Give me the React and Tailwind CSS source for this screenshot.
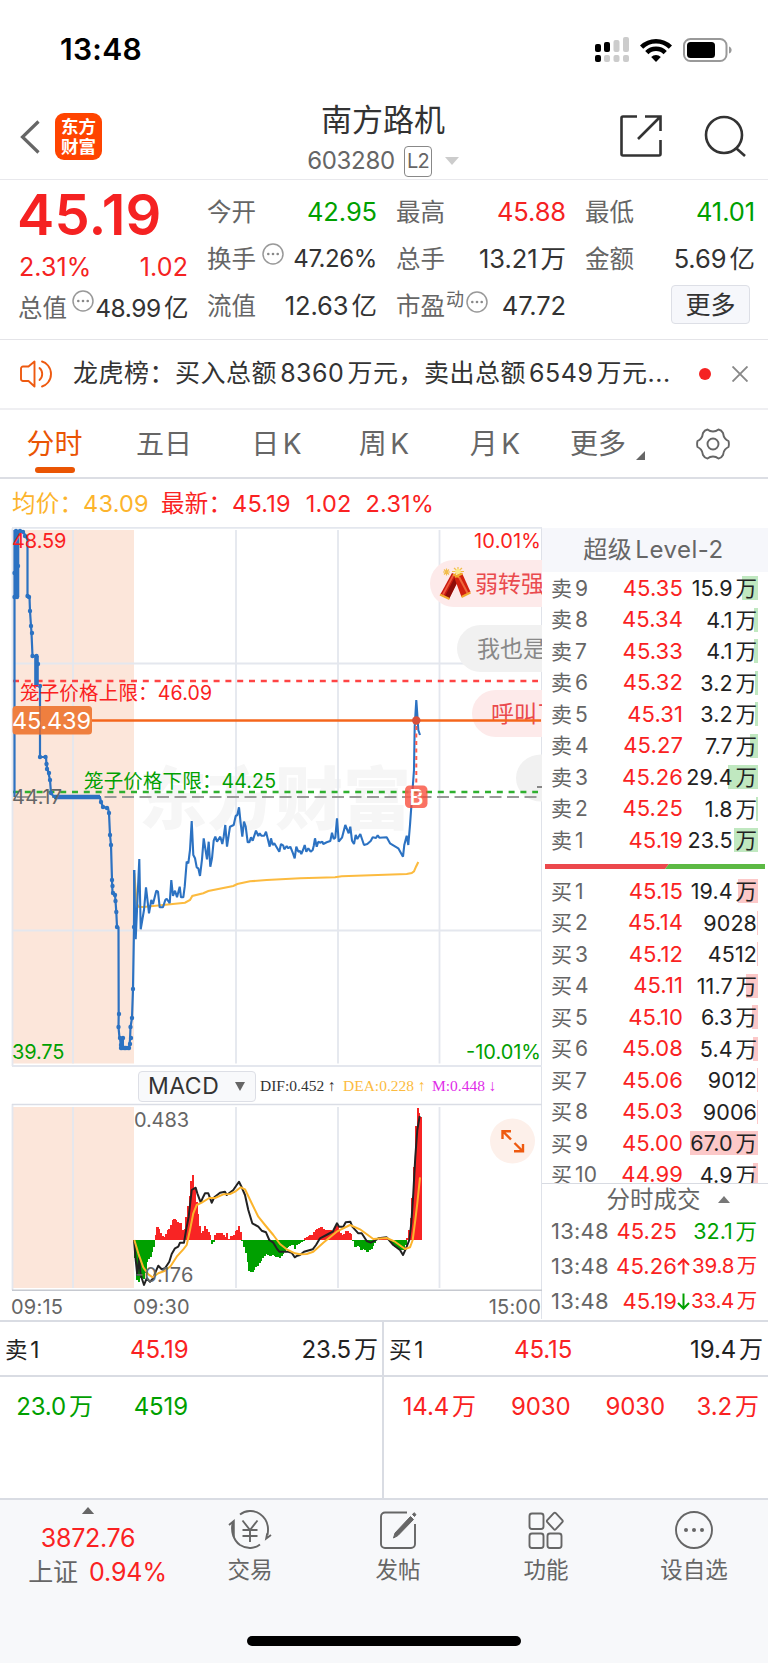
import React from "react";

/* ---------- chart data (thirds of a pixel, relative to each pane) ---------- */
const parse = (text, ox, oy) =>
  text
    .trim()
    .split(/\s+/)
    .map((p) => p.split(",").map(Number))
    .map(([x, y]) => [ox + x / 3, oy + y / 3]);
const join = (...parts) => parts.flat().map((p) => p[0].toFixed(1) + "," + p[1].toFixed(1)).join(" ");

const AUCTION =
  "14.5,797 14.5,531 23,531 25,535 27.5,540 27.5,596 29.5,597 30,611 31,626 31.5,633 32.5,656 36,656 36,686 40,686 40,757 46,757 46.5,765 48,771 50,780 51,793 54,797 100,797 101,802 103,807 108,808 109,813 110,835 111,845 112,880 112.5,893 115,895 115.5,901 116.3,912 117,927 118.5,927.5 118.7,1014 118.5,1027 119.5,1038 121,1039 121,1048 129,1048 130,1040 130.5,1027 132,1018 133,989 134,927 134.3,870";
const AUCTION_DOTS = [
  [14.5, 573], [14.5, 597], [17, 597], [18, 566], [16, 531], [20, 531], [23, 532], [25, 536], [27.5, 596], [29, 597], [30, 611], [31, 626], [32, 633],
  [32.5, 656], [36.5, 656], [38, 664], [40, 686], [40, 757], [45.5, 757], [46.5, 764], [47, 769], [49, 773], [50, 780], [51, 793],
  [101, 802], [103, 807], [107, 808], [109, 813], [110, 835], [111, 845], [112, 880], [112.5, 886], [113, 893], [115, 895],
  [115.5, 901], [116.3, 912], [117, 927], [119, 1014], [118.5, 1027], [120, 1038], [123, 1038], [121, 1045], [121, 1048], [125, 1048],
  [129, 1048], [130, 1044], [131, 1038], [130.5, 1027], [132, 1018], [133, 989], [134, 927],
];

const priceLine = join(
  parse(
    "402,300 407,508 411,420 418,267 422,478 432,420 438,352 447,430 454,390 459,402 469,362 474,365 479,412 489,412 496,390 500,386 509,400 514,330 519,378 525,362 531,382 539,350 543,382 550,382 554,350 560,275 565,280 570,240 575,153 580,255 585,265 590,292 595,295 600,318 606,268 611,205 621,268 626,215 631,290 636,265 641,212 646,200 651,215 661,200 667,222 671,200 676,165 681,230 690,170 701,165 707,138 712,135 717,112 722,160 727,200 732,155 737,170 743,217 748,217 753,202 758,212 768,182 775,198 779,190 784,197 793,197 798,185 809,230 813,205 818,225 823,220 838,245 843,222 850,227 853,238 860,228 865,235 871,230 879,250 884,265 889,230 895,245 900,243",
    0, 770
  ),
  parse(
    "64,252 69,240 74,225 79,245 85,235 92,245 98,240 101,228 105,205 110,230 115,215 120,218 127,215 130,222 140,217 151,213 156,188 161,207 166,203 171,145 176,215 186,203 196,165 206,190 211,170 216,212 222,222 227,195 232,207 241,192 252,225 262,222 272,213 278,202 288,204 293,196 298,203 320,202 330,220 355,235 369,260 373,225 380,197 385,225 390,165 394,110 402,0 404,-130 409,-210 413,-150 415,-120 420,-105",
    280, 770
  )
);
const averageLine = join(
  parse("403,310 410,400 415,410 430,411 489,405 555,398 570,390 577,378 610,370 625,363 700,348 712,342 750,334 800,330 900,325", 0, 770),
  parse("165,322 185,319 380,312 395,309 402,304 408,290 415,276", 280, 770)
);
const difLine = join(
  parse(
    "402,540 407,600 412,645 417,595 422,645 432,675 440,655 450,665 460,655 467,635 475,617 485,628 495,625 508,605 515,582 525,565 535,560 540,548 552,548 560,500 566,470 575,390 587,383 592,400 602,427 610,410 615,400 625,400 635,428 643,412 660,398 675,395 680,405 700,390 710,375 717,365 725,382 735,405 745,450 757,490 775,500 785,512 798,517 808,540 820,548 830,565 838,575 865,575 875,578 884,592 892,587 900,585",
    0, 1060
  ),
  parse(
    "72,575 98,568 108,555 120,535 145,522 158,515 171,490 177,500 190,500 197,487 211,485 217,500 235,520 245,520 260,543 272,548 285,542 295,535 320,532 340,555 360,570 369,585 378,565 388,540 394,490 400,400 406,290 412,210 419,168",
    280, 1060
  )
);
const deaLine = join(
  parse(
    "403,540 415,580 430,622 445,643 458,652 475,640 495,632 512,618 530,590 550,568 560,555 570,510 580,460 590,435 605,428 628,414 645,414 670,403 690,402 705,395 722,382 735,388 755,430 775,470 795,495 820,525 840,552 860,568 885,580",
    0, 1060
  ),
  parse("60,583 80,582 100,575 130,548 170,515 210,495 240,508 280,537 320,534 345,545 375,567 390,562 398,540 406,480 412,430 420,352", 280, 1060)
);

const HIST = [
  [403, -10], [408, -100], [413, -136], [418, -115], [423, -112], [432, -118], [438, -92], [442, -60], [447, -56], [452, -50], [458, -33], [464, -12],
  [468, 27], [474, 45], [479, 25], [484, 18], [490, 5], [495, 12], [500, 25], [505, 33], [511, 33], [515, 60], [525, 63], [530, 60],
  [536, 48], [541, 57], [546, 40], [551, 20], [556, 50], [561, 90], [566, 115], [571, 148], [577, 209], [582, 175], [587, 130],
  [592, 95], [597, 58], [602, 25], [607, 15], [612, 42], [617, 42], [622, 25], [629, 25], [632, -5], [637, -18], [641, -2], [642, 2], [647, 20],
  [667, 20], [672, 15], [677, 8], [681, 20], [685, 1], [691, 12], [697, 12], [702, 15], [707, 30], [712, 30], [717, 42], [722, 22],
  [726, 20], [727, -10], [732, -20], [737, -38], [742, -65], [747, -92], [752, -95], [760, -97], [765, -82], [775, -75], [785, -58], [795, -45],
  [800, -38], [805, -48], [812, -50], [817, -42], [825, -50], [835, -52], [842, -57], [845, -45], [850, -42], [860, -22],
  [870, -18], [880, -14], [883, -30], [890, -15], [900, -8], [912, -3], [915, 6], [925, 12], [935, 15], [945, 28], [955, 36], [965, 39],
  [975, 30], [990, 30], [1000, 25], [1010, 48], [1020, 25], [1030, 12], [1040, 30], [1050, 20], [1056, 18], [1060, -20], [1070, -22],
  [1075, -15], [1083, -30], [1090, -25], [1098, -36], [1105, -36], [1115, -25], [1123, -12], [1130, 1], [1160, 4], [1166, -2],
  [1175, -10], [1185, -20], [1195, -28], [1212, -30], [1219, -5], [1222, 8], [1226, 25], [1230, 50], [1235, 95], [1240, 180], [1244, 265],
  [1249, 392], [1254, 398], [1259, 370], [1265, 370],
];
const histAt = (x) => {
  for (let i = 1; i < HIST.length; i++) {
    if (x <= HIST[i][0]) {
      const [x0, y0] = HIST[i - 1];
      const [x1, y1] = HIST[i];
      return y0 + ((y1 - y0) * (x - x0)) / (x1 - x0);
    }
  }
  return HIST[HIST.length - 1][1];
};
const bars = Array.from({ length: 169 }, (_, i) => {
  const x = 403 + i * 5.1;
  return { x: x / 3, h: histAt(x + 2.5) / 3 };
});

/* ---------- small parts ---------- */
const Dots = ({ className = "" }) => (
  <svg viewBox="0 0 22 22" className={"size-[22px] shrink-0 " + className} fill="none">
    <circle cx="11" cy="11" r="10" stroke="#999" strokeWidth="1.5" />
    <circle cx="6.3" cy="11" r="1.3" fill="#888" />
    <circle cx="11" cy="11" r="1.3" fill="#888" />
    <circle cx="15.7" cy="11" r="1.3" fill="#888" />
  </svg>
);

const Cell = ({ label, value, color = "text-[#333]", mark, size = "text-[25.5px] tracking-[-0.1px]" }) => (
  <div className="flex h-[47px] items-center justify-between">
    <span className="-ml-px flex items-center pt-[1px] text-[24.5px] text-[#666]">
      {label}
      {mark}
    </span>
    <span className={"pt-[1px] whitespace-nowrap " + size + " " + color}>{value}</span>
  </div>
);

const StatusBar = () => (
  <header className="flex h-[94px] items-center justify-between pt-[5px] pr-[36px] pl-[60px]">
    <span className="text-[30px] font-semibold tracking-[0.3px] text-black">13:48</span>
    <div className="flex items-center gap-[11px]">
      <svg viewBox="0 0 34 25" className="h-[25px] w-[34px]">
        <g fill="#000">
          <rect x="0" y="7" width="6" height="8" rx="2" />
          <rect x="9" y="5" width="6" height="10" rx="2" />
          <rect x="0" y="18" width="6" height="7" rx="2" />
        </g>
        <g fill="#ccc">
          <rect x="18.500" y="3" width="6" height="12" rx="2" />
          <rect x="28" y="0" width="6" height="15" rx="2" />
          <rect x="9" y="18" width="6" height="7" rx="2" />
          <rect x="18.500" y="18" width="6" height="7" rx="2" />
          <rect x="28" y="18" width="6" height="7" rx="2" />
        </g>
      </svg>
      <svg viewBox="0 0 32 24" className="h-[24px] w-[32px]" fill="none" stroke="#000" strokeWidth="4.600">
        <path d="M1.600 9.200a20.500 20.500 0 0 1 28.800 0" />
        <path d="M6.800 14.600a13 13 0 0 1 18.400 0" />
        <path d="M16 24l-4.800-5a6.800 6.800 0 0 1 9.600 0z" fill="#000" stroke="none" />
      </svg>
      <svg viewBox="0 0 49 24" className="h-[24px] w-[49px]">
        <rect x="1" y="1" width="42.500" height="22" rx="6.500" fill="none" stroke="#999" strokeWidth="2" />
        <rect x="4" y="4" width="28" height="16" rx="3.500" fill="#000" />
        <path d="M46 8.500c3.500 1 3.500 6 0 7z" fill="#999" />
      </svg>
    </div>
  </header>
);

const TitleBar = () => (
  <div className="grid h-[86px] grid-cols-[1fr_200px_1fr] border-b border-[#e8e8ec] pb-[1px]">
    <div className="flex items-center pl-[20px]">
      <svg viewBox="0 0 20 34" className="h-[34px] w-[20px]" fill="none" stroke="#666" strokeWidth="3.200">
        <path d="M18.500 1.500L2.500 17l16 15.500" />
      </svg>
      <div className="ml-[15px] flex size-[47px] flex-col items-center justify-center rounded-[9px] bg-[#ff4400] text-[17.500px] leading-[20px] font-bold text-white">
        <span>东方</span>
        <span>财富</span>
      </div>
    </div>
    <div className="-ml-[2px] flex flex-col items-center">
      <div className="mt-[6px] h-[43px] text-[31px] leading-[40px] text-[#333]">南方路机</div>
      <div className="flex h-[36px] items-center text-[#666]">
        <span className="text-[24px] tracking-[-0.300px]">603280</span>
        <span className="ml-[9px] flex h-[31px] w-[28px] items-center justify-center rounded-[4px] border-[1.500px] border-[#888] text-[20px] tracking-[-1px]">L2</span>
        <svg viewBox="0 0 14 8" className="ml-[13px] h-[8px] w-[14px]">
          <path d="M0 0h14L7 8z" fill="#ccc" />
        </svg>
      </div>
    </div>
    <div className="flex items-center justify-end gap-[41px] pr-[22px] pb-[1px]">
      <svg viewBox="0 0 44 44" className="size-[44px]" fill="none" stroke="#333" strokeWidth="2.600">
        <path d="M18 2.500H4a1.500 1.500 0 0 0-1.500 1.500v36A1.500 1.500 0 0 0 4 41.500h36a1.500 1.500 0 0 0 1.500-1.500V26" />
        <path d="M26 2.500h15.500V17M41 3L19 25" />
      </svg>
      <svg viewBox="0 0 42 42" className="size-[42px]" fill="none" stroke="#333" strokeWidth="2.600">
        <circle cx="20" cy="20" r="18" />
        <path d="M32.500 33.500L41 41" />
      </svg>
    </div>
  </div>
);

const Quote = () => (
  <section className="grid h-[160px] grid-cols-[168px_169px_169px_169px] gap-x-[20px] border-b border-[#e4e4e8] pt-[8px] pl-[20px]">
    <div className="flex flex-col">
      <div className="flex h-[54px] items-center text-[56px] font-semibold tracking-[0.200px] text-[#f52222]">
        <span className="-ml-[3px]">45.19</span>
      </div>
      <div className="flex h-[50px] items-center justify-between pt-[1px] text-[25px] tracking-[0.100px] text-[#f52222]">
        <span className="-ml-[1px]">2.31%</span>
        <span>1.02</span>
      </div>
      <div className="flex h-[30px] items-center justify-between pt-[2px] text-[24.500px] whitespace-nowrap">
        <span className="-ml-[2px] flex text-[#666]">
          总值
          <Dots className="ml-[5px]" />
        </span>
        <span className="tracking-[-0.400px] text-[#333]">48.99亿</span>
      </div>
    </div>
    <div>
      <Cell label="今开" value="42.95" color="text-[#00a000]" />
      <Cell label="换手" value="47.26%" size="text-[24px] tracking-[-0.4px]" mark={<Dots className="mb-[10px] ml-[6px]" />} />
      <Cell label="流值" value="12.63亿" />
    </div>
    <div>
      <Cell label="最高" value="45.88" color="text-[#f52222]" />
      <Cell label="总手" value="13.21万" />
      <Cell
        label="市盈"
        value="47.72"
        mark={
          <span className="mb-[12px] ml-[1px] flex items-center text-[18px] leading-none">
            动
            <Dots className="mt-[4px] ml-[2px]" />
          </span>
        }
      />
    </div>
    <div>
      <Cell label="最低" value="41.01" color="text-[#00a000]" />
      <Cell label="金额" value="5.69亿" />
      <div className="flex h-[45px] items-center justify-end pr-[5px]">
        <button className="h-[39px] w-[79px] rounded-[4px] border border-[#dddfe6] bg-[#f6f7fb] pt-[1px] text-[25px] leading-none text-[#333]">更多</button>
      </div>
    </div>
  </section>
);

const News = () => (
  <section className="flex h-[70px] items-center border-b-2 border-[#efeff2] pr-[20px] pl-[20px]">
    <svg viewBox="0 0 33 28" className="h-[28px] w-[33px]" fill="none" stroke="#ee5a10" strokeWidth="1.900" strokeLinejoin="round" strokeLinecap="round">
      <path d="M14.500 1.500v25L8.500 21H3a2 2 0 0 1-2-2V8.500a2 2 0 0 1 2-2h5.500z" />
      <path d="M19.500 8c3.600 3 3.600 9 0 12M22 1.500c4 1 9 5.500 9 12.500s-5 11.500-9 12.500" />
    </svg>
    <span className="ml-[20px] w-[600px] text-[25px] tracking-[0.500px] whitespace-nowrap text-[#333]">龙虎榜：买入总额8360万元，卖出总额6549万元...</span>
    <span className="ml-auto size-[12px] rounded-full bg-[#f52222]" />
    <svg viewBox="0 0 16 16" className="ml-[21px] size-[16px]" stroke="#888" strokeWidth="1.900">
      <path d="M0.500 0.500l15 15M15.500 0.500l-15 15" />
    </svg>
  </section>
);

const Tabs = () => (
  <nav className="flex h-[69px] items-center border-b-2 border-[#dcdee4] text-[28px] whitespace-nowrap text-[#666]">
    <div className="flex h-full w-[110px] flex-col items-center pt-[13px] text-[#ea5504]">
      <span className="-ml-px leading-[42px]">分时</span>
      <span className="mt-[2px] h-[6px] w-[40px] rounded-full bg-[#ea5504]" />
    </div>
    <span className="w-[108px] pt-[1px] text-center">五日</span>
    <span className="w-[117px] pt-[1px] text-center">日K</span>
    <span className="w-[98px] pt-[1px] text-center">周K</span>
    <span className="w-[124px] pt-[1px] text-center">月K</span>
    <span className="ml-[13px] flex pt-[1px]">
      更多
      <svg viewBox="0 0 9 9" className="mt-[28px] ml-[10px] size-[9px]">
        <path d="M9 0v9H0z" fill="#666" />
      </svg>
    </span>
    <svg viewBox="0 0 34 32" className="ml-[51px] h-[32px] w-[34px]" fill="none" stroke="#666" strokeWidth="1.900" strokeLinejoin="round">
      <circle cx="17" cy="16" r="5.500" />
      <path d="M11.500 1.500q2.500 2 5.500 2t5.500-2q3 .5 4.500 3.500.5 3.500 2 5.300T32.500 13q.8 3 0 6-2 1-3.500 2.700T27 27q-1.500 3-4.500 3.500-2.500-2-5.500-2t-5.500 2Q8.500 30 7 27q-.5-3.500-2-5.300T1.500 19q-.8-3 0-6 2-1 3.500-2.700T7 5q1.500-3 4.500-3.500z" />
    </svg>
  </nav>
);

const FONT = '"Inter","Noto Sans CJK SC",sans-serif';

const PriceChart = () => (
  <svg viewBox="0 527 542 541" className="block h-[541px] w-[542px]" fontFamily={FONT}>
    <text x="139" y="824" fontSize="68" fontWeight="900" fill="#f6f6f6">东方财富</text>
    <rect x="13" y="530" width="121" height="533.500" fill="#fce6da" />
    <g stroke="#e4e7ee" strokeWidth="1.800">
      <path d="M12.500 528V1066M73 530V1063.500M236 530V1063.500M338 530V1063.500M439.500 530V1063.500M12 663.500H542M12 930.500H542" />
      <path d="M12 527.800H542M12 1066H542" />
    </g>
    <g>
      <path d="M542 560H453.500a23.500 23.500 0 0 0 0 47H542z" fill="#fdeaea" />
      <path d="M542 625H480.500a23.500 23.500 0 0 0 0 47H542z" fill="#f1f1f1" />
      <path d="M542 690H495.500a23.500 23.500 0 0 0 0 47H542z" fill="#fdeaea" />
      <path d="M542 754.500a25 23.500 0 0 0-26 23.500a25 23.500 0 0 0 26 23.500z" fill="#f1f1f1" />
      <text x="475" y="592" fontSize="23" fill="#ea4a4e">弱转强</text>
      <text x="477" y="657" fontSize="23" fill="#888">我也是</text>
      <text x="491" y="722" fontSize="23" fill="#ea4a4e">呼叫了</text>
      <path d="M537 787H542" stroke="#888" strokeWidth="2" />
      <g>
        <g stroke="#f2bd4c" strokeWidth="1.200">
          <path d="M443 572h7M446.500 568.500v7M444 569.500l5 5M449 569.500l-5 5" />
          <path d="M452 571.500h12M458 567v8M454 568l8 7M462 568l-8 7" />
        </g>
        <circle cx="458" cy="571.500" r="2.800" fill="#fbe98c" />
        <path d="M440 595L452 573l8 4-11 22z" fill="#c81a10" />
        <path d="M444.500 597L456 575l4 2-11 22z" fill="#8f0d08" />
        <path d="M443 594.500L453.500 575" stroke="#f0593c" strokeWidth="1.800" />
        <path d="M454 577l8-4 8.500 19-9 5z" fill="#d3210f" />
        <path d="M459 577l8.500 16" stroke="#f0683c" strokeWidth="2" />
        <path d="M440 594.500l9.500 4.500M461.500 597l9-4.500M453 574.500l6 2.500M455 577l7.500-3.500" stroke="#f1a92e" strokeWidth="2" />
      </g>
    </g>
    <path d="M13 681H538" stroke="#f44" strokeWidth="2.600" strokeDasharray="6 5.800" />
    <path d="M13 792H538" stroke="#2fb02f" strokeWidth="2.700" strokeDasharray="6 5.800" />
    <path d="M17 797H538" stroke="#999" strokeWidth="2.200" strokeDasharray="12 5.500" />
    <polyline points={averageLine} fill="none" stroke="#fcbb40" strokeWidth="2.100" />
    <polyline points={AUCTION} fill="none" stroke="#2c72c2" strokeWidth="2.200" />
    <path d="M54 797H100" stroke="#2c72c2" strokeWidth="4.500" />
    <path d="M17 531V597M36.500 656V685" stroke="#2c72c2" strokeWidth="4.600" />
    <path d="M119 1039h5v9h-4z" fill="#2c72c2" />
    <path d="M120.500 1048H129.500" stroke="#2c72c2" strokeWidth="4.200" />
    {AUCTION_DOTS.map(([x, y], i) => (
      <circle key={i} cx={x} cy={y} r="2.200" fill="#2c72c2" />
    ))}
    <polyline points={priceLine} fill="none" stroke="#2c72c2" strokeWidth="2.100" strokeLinejoin="bevel" />
    <path d="M13 720.500H541" stroke="#f5661c" strokeWidth="2.600" />
    <path d="M416.300 726V786" stroke="#ff5a4a" strokeWidth="2" strokeDasharray="4 3.500" />
    <circle cx="416.300" cy="720.500" r="4.200" fill="#d9503a" />
    <rect x="405" y="785.500" width="22.500" height="22.500" rx="4.500" fill="#f84a38" fillOpacity="0.780" />
    <text x="416.300" y="804.500" fontSize="21" fontWeight="600" fill="#fff" textAnchor="middle">B</text>
    <path d="M405 797H428M405 792H428" stroke="#f2685a" strokeWidth="1.500" strokeDasharray="6 5.800" opacity=".8" />
    <rect x="12.500" y="706" width="79.500" height="28.500" rx="3.500" fill="#ef7f3f" />
    <path d="M40 706V734.500" stroke="#b96a4e" strokeWidth="1.600" />
    <text x="12" y="729" fontSize="23.500" textLength="79" fill="#fff">45.439</text>
    <g fontSize="20">
      <text x="12" y="547.500" textLength="54.500" fill="#fa2020">48.59</text>
      <text x="541" y="547.500" textLength="67" textAnchor="end" fill="#fa2020">10.01%</text>
      <text x="12" y="803.500" textLength="50" fill="#666">44.17</text>
      <text x="12" y="1059" textLength="52.500" fill="#00a000">39.75</text>
      <text x="541" y="1059" textLength="75" textAnchor="end" fill="#00a000">-10.01%</text>
    </g>
    <g fontSize="19.500">
      <text x="20" y="700" textLength="192" fill="#fa2020">笼子价格上限：46.09</text>
      <text x="84" y="788" textLength="192" fill="#00a000">笼子价格下限：44.25</text>
    </g>
  </svg>
);

const MacdChart = () => (
  <svg viewBox="0 1103 542 188" className="block h-[188px] w-[542px]" fontFamily={FONT}>
    <rect x="13" y="1107" width="121" height="181" fill="#fce6da" />
    <g stroke="#e4e7ee" strokeWidth="1.800">
      <path d="M12.500 1104V1290M73 1107V1288M236 1107V1288M338 1107V1288M439.500 1107V1288" />
    </g>
    <path d="M12 1104.500H542" stroke="#dadde5" strokeWidth="1.500" />
    <path d="M12 1290.300H542" stroke="#c6c9d0" strokeWidth="1.500" />
    <g shapeRendering="crispEdges">
      {bars.map((b, i) => (
        <rect key={i} x={b.x} y={b.h > 0 ? 1240 - b.h : 1240} width="2.100" height={Math.abs(b.h)} fill={b.h > 0 ? "#f82424" : "#00a000"} />
      ))}
    </g>
    <polyline points={difLine} fill="none" stroke="#222" strokeWidth="2" strokeLinejoin="round" />
    <polyline points={deaLine} fill="none" stroke="#fcb42c" strokeWidth="2" strokeLinejoin="round" />
    <g fontSize="20" fill="#666">
      <text x="134" y="1127" textLength="55">0.483</text>
      <text x="135" y="1282" textLength="58.500">-0.176</text>
    </g>
    <circle cx="512.500" cy="1141" r="22.500" fill="#fdf0ea" />
    <path d="M502.500 1139V1131.200H511M503 1131.500l8 8M523 1144V1151.300H514M522.500 1151l-8-8" fill="none" stroke="#ee5a10" strokeWidth="2.400" />
  </svg>
);

const Chart = () => (
  <div className="flex h-[792px] w-[542px] flex-col border-r border-[#dfe2e9]">
    <PriceChart />
    <div className="flex h-[35px] items-center pl-[138px] whitespace-nowrap">
      <div className="mt-[1px] flex h-[31px] w-[118px] items-center justify-between rounded-[4px] border border-[#dddfe6] bg-[#f8f9fb] pr-[10px] pl-[9px]">
        <span className="text-[23px] leading-none tracking-[0.500px] text-[#333]">MACD</span>
        <svg viewBox="0 0 10 9" className="h-[9px] w-[10px]">
          <path d="M0 0h10L5 9z" fill="#666" />
        </svg>
      </div>
      <div className="flex items-center pt-[1px] font-['Liberation_Serif'] text-[15.500px]">
        <span className="ml-[4px] w-[83px] text-[#333]">DIF:0.452 ↑</span>
        <span className="w-[89px] text-[#fcbb40]">DEA:0.228 ↑</span>
        <span className="text-[#e02ce8]">M:0.448 ↓</span>
      </div>
    </div>
    <MacdChart />
    <div className="flex h-[28px] items-center pt-[4px] pl-[11px] text-[20px] tracking-[0.200px] text-[#666]">
      <span className="w-[122px]">09:15</span>
      <span>09:30</span>
      <span className="ml-auto">15:00</span>
    </div>
  </div>
);

const ASKS = [
  ["卖9", "45.35", "15.9万", 16], ["卖8", "45.34", "4.1万", 4], ["卖7", "45.33", "4.1万", 4],
  ["卖6", "45.32", "3.2万", 3], ["卖5", "45.31", "3.2万", 3], ["卖4", "45.27", "7.7万", 8],
  ["卖3", "45.26", "29.4万", 30], ["卖2", "45.25", "1.8万", 2], ["卖1", "45.19", "23.5万", 24],
];
const BIDS = [
  ["买1", "45.15", "19.4万", 20], ["买2", "45.14", "9028", 1], ["买3", "45.12", "4512", 1],
  ["买4", "45.11", "11.7万", 12], ["买5", "45.10", "6.3万", 6], ["买6", "45.08", "5.4万", 5],
  ["买7", "45.06", "9012", 1], ["买8", "45.03", "9006", 1], ["买9", "45.00", "67.0万", 68],
  ["买10", "44.99", "4.9万", 5],
];

const Level = ({ row: [label, price, volume, bar], tone }) => (
  <div className="grid h-[31.500px] shrink-0 grid-cols-[60px_72px_74px] items-center pl-[9px] text-[22px] tracking-[0.100px] whitespace-nowrap">
    <span className="text-[21px] tracking-[0.300px] text-[#666]">{label}</span>
    <span className="text-right text-[#fa2222]">{price}</span>
    <span className="relative flex h-[24px] items-center justify-end text-[21.500px] text-[#222]">
      <span className={"absolute top-0 right-[-1px] h-full " + tone} style={{ width: bar }} />
      <span className="relative">{volume}</span>
    </span>
  </div>
);

const TICKS = [
  ["13:48", "45.25", "", "32.1万", "text-[21.5px] text-[#00a000]"],
  ["13:48", "45.26", "↑", "39.8万", "text-[20.5px] tracking-[-0.2px] text-[#fa2222]"],
  ["13:48", "45.19", "↓", "33.4万", "text-[20.5px] tracking-[-0.2px] text-[#fa2222]"],
];

const Depth = () => (
  <aside className="flex h-[792px] w-[226px] flex-col">
    <div className="mt-[1px] flex h-[44px] items-center justify-center bg-[#f6f7fb] pr-[3px] text-[24px] tracking-[0.500px] text-[#666]">超级Level-2</div>
    <div className="flex flex-col">
      {ASKS.map((r) => (
        <Level key={r[0]} row={r} tone="bg-[#c0e8c0]" />
      ))}
    </div>
    <div className="mx-[3px] mt-[8.500px] mb-[6px] flex h-[5px] shrink-0">
      <svg viewBox="0 0 220 5" className="h-[5px] w-[220px]">
        <path d="M0 0h124l-4 5H0z" fill="#ec484c" />
        <path d="M124 0h96v5H120z" fill="#5cb944" />
      </svg>
    </div>
    <div className="flex h-[310.500px] flex-col overflow-hidden border-b-[1.500px] border-[#d8dbe2]">
      {BIDS.map((r) => (
        <Level key={r[0]} row={r} tone="bg-[#fcc8c8]" />
      ))}
    </div>
    <div className="flex h-[30.500px] shrink-0 items-center justify-center pt-[2px] pl-[26px] text-[23.500px] text-[#666]">
      分时成交
      <svg viewBox="0 0 12 7" className="ml-[17px] h-[7px] w-[12px]">
        <path d="M0 7h12L6 0z" fill="#777" />
      </svg>
    </div>
    {TICKS.map(([time, price, arrow, volume, tone], i) => (
      <div key={i} className="flex h-[35px] shrink-0 items-center pl-[9px] text-[22px] whitespace-nowrap">
        <span className="w-[58px] tracking-[0.200px] text-[#666]">{time}</span>
        <span className="w-[68px] text-right tracking-[0.100px] text-[#fa2222]">{price}</span>
        <svg viewBox="0 0 13 17" className="h-[17px] w-[13px]" fill="none" stroke={arrow === "↑" ? "#fa2222" : "#00a000"} strokeWidth="2">
          {arrow === "↑" && <path d="M6.500 16.500V1.500M1 7l5.500-5.500L12 7" />}
          {arrow === "↓" && <path d="M6.500 0.500v15M1 10l5.500 5.500L12 10" />}
        </svg>
        <span className={"w-[67px] text-right " + tone}>{volume}</span>
      </div>
    ))}
  </aside>
);

const Best = () => (
  <section className="grid h-[180px] grid-cols-[384px_384px] grid-rows-[55px_125px] border-t-2 border-b-2 border-[#d9dce3] text-[24px] tracking-[-0.100px] whitespace-nowrap">
    <div className="flex items-center border-r-2 border-b-2 border-[#d9dce3] pt-[2px] pr-[4px] pl-[5px] text-[#222]">
      <span className="w-[125px] text-[22.500px]">卖1</span>
      <span className="text-[#fa2222]">45.19</span>
      <span className="ml-auto">23.5万</span>
    </div>
    <div className="flex items-center border-b-2 border-[#d9dce3] pt-[2px] pr-[5px] pl-[5px] text-[#222]">
      <span className="w-[125px] text-[22.500px]">买1</span>
      <span className="text-[#fa2222]">45.15</span>
      <span className="ml-auto">19.4万</span>
    </div>
    <div className="grid grid-cols-[93px_95px_96px_96px] items-start border-r-2 border-[#d9dce3] pt-[12px] text-right text-[#00a000]">
      <span>23.0万</span>
      <span>4519</span>
    </div>
    <div className="grid grid-cols-[92px_94.500px_94.500px_94px] items-start pt-[12px] text-right text-[#fa2222]">
      <span>14.4万</span>
      <span>9030</span>
      <span>9030</span>
      <span>3.2万</span>
    </div>
  </section>
);

const NavItem = ({ label, children }) => (
  <div className="flex w-[148px] flex-col items-center pt-[8px] text-[22.500px] text-[#666]">
    <svg viewBox="0 0 44 44" className="size-[44px]" fill="none" stroke="#666" strokeWidth="1.900">
      {children}
    </svg>
    <span className="leading-[36px]">{label}</span>
  </div>
);

const BottomNav = () => (
  <footer className="flex h-[163px] flex-col bg-[#f7f8fa]">
    <div className="flex h-[130px] whitespace-nowrap">
      <div className="flex w-[176px] flex-col items-center pt-[7px]">
        <svg viewBox="0 0 14 8" className="h-[7px] w-[14px]">
          <path d="M0 8h14L7 0z" fill="#666" />
        </svg>
        <span className="mt-[8px] text-[25px] leading-[32px] tracking-[-0.300px] text-[#fa2222]">3872.76</span>
        <span className="ml-[19px] flex gap-[11px] text-[25px] leading-[36px] tracking-[-0.100px]">
          <span className="text-[#666]">上证</span>
          <span className="text-[#fa2222]">0.94%</span>
        </span>
      </div>
      <NavItem label="交易">
        <path d="M12 6.500C17 2.500 26 1.500 32 6c7 5 9 13 7.500 21M32 36.500c-5 4-13 5-20 .5C5 32 2.500 22 5 14" />
        <path d="M1 17l4.800-4V29M43 27l-4.800 3.500 1-5" />
        <path d="M14.500 12.500L22 22l7.500-9.500M22 22v12M14.500 22h15M14.500 28h15" />
      </NavItem>
      <NavItem label="发帖">
        <path d="M31 4.500H9a4 4 0 0 0-4 4V36a4 4 0 0 0 4 4h26a4 4 0 0 0 4-4V16" />
        <path d="M34.500 8.500l3 3L22 27.500l-4.500 2.500 1.500-5zM36.500 6.500l1.500-1.800 2 1.800-1.500 2z" fill="#666" strokeWidth="1" />
      </NavItem>
      <NavItem label="功能">
        <rect x="5.500" y="5.500" width="14" height="15.500" rx="2.500" />
        <rect x="5.500" y="25.500" width="14" height="14.500" rx="2.500" />
        <rect x="23.500" y="25.500" width="14" height="14.500" rx="2.500" />
        <path d="M29.800 5.200q1-1 2 0l6.500 7q.9 1 0 2l-6.500 7q-1 1-2 0l-6.500-7q-.9-1 0-2z" />
      </NavItem>
      <NavItem label="设自选">
        <circle cx="22" cy="22" r="18" />
        <g fill="#666" stroke="none">
          <circle cx="14" cy="22" r="2" />
          <circle cx="22" cy="22" r="2" />
          <circle cx="30" cy="22" r="2" />
        </g>
      </NavItem>
    </div>
    <div className="mx-auto mt-[6px] h-[10px] w-[274px] rounded-full bg-black" />
  </footer>
);

export default function App() {
  return (
    <main className="flex h-[1663px] w-[768px] flex-col overflow-hidden bg-white font-['Inter','Noto_Sans_CJK_SC',sans-serif] [text-autospace:normal]">
      <StatusBar />
      <TitleBar />
      <Quote />
      <News />
      <Tabs />
      <div className="flex h-[48px] items-center pt-[2px] pl-[12px] text-[23.500px] tracking-[0.200px] whitespace-nowrap">
        <span className="w-[149px] text-[#fcb42c]">均价：43.09</span>
        <span className="text-[#fa2222]">最新：45.19</span>
        <span className="ml-[15px] text-[#fa2222]">1.02</span>
        <span className="ml-[14px] text-[#fa2222]">2.31%</span>
      </div>
      <div className="flex h-[793px]">
        <Chart />
        <Depth />
      </div>
      <Best />
      <BottomNav />
    </main>
  );
}
